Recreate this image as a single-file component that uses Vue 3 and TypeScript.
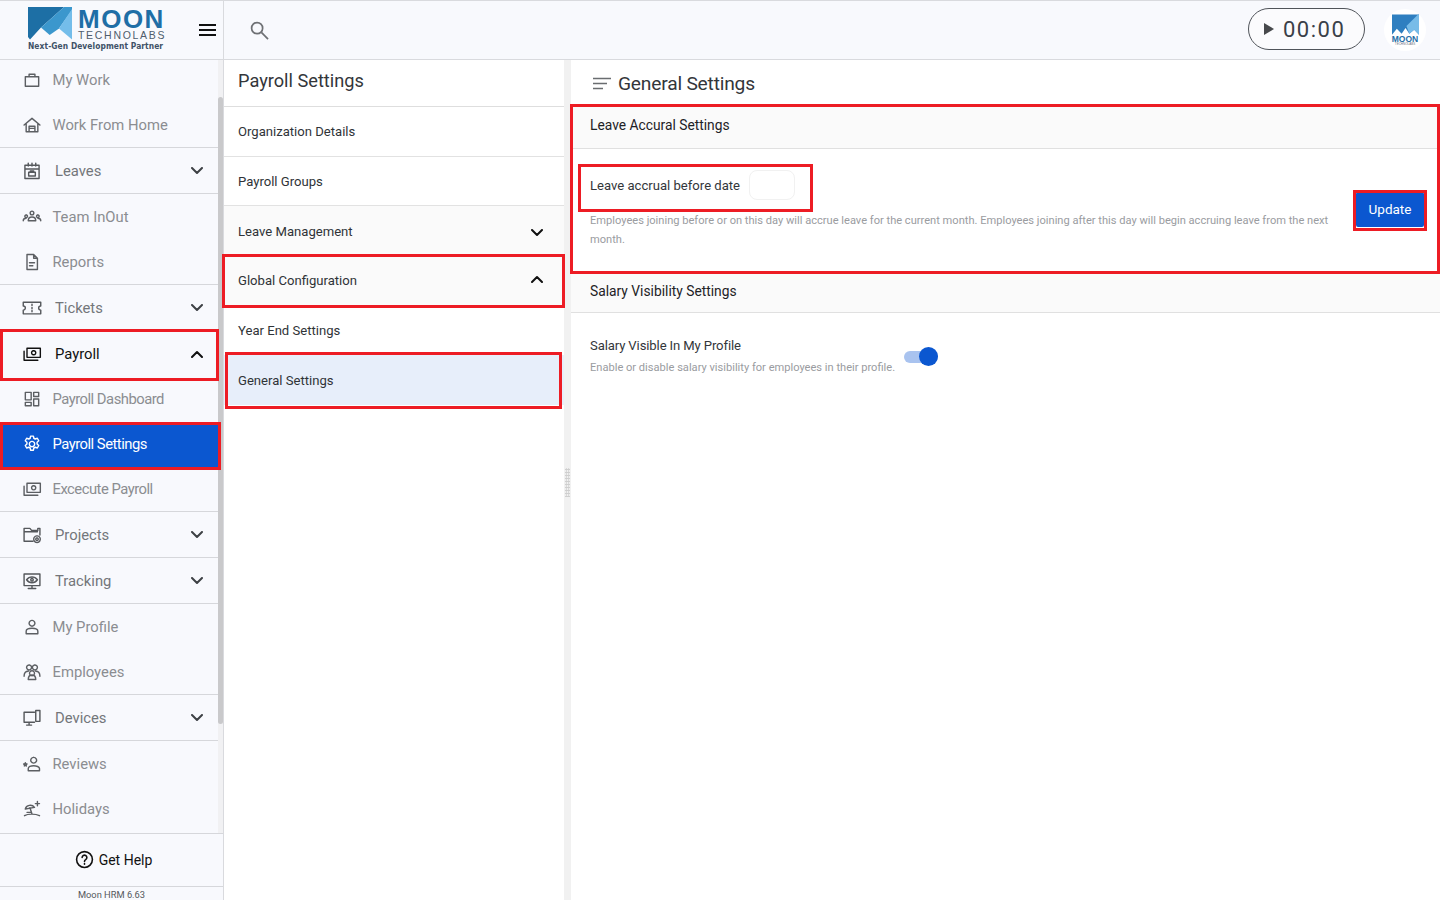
<script setup lang="ts">
interface NavItem { label: string; icon: string; kind: 'sub' | 'group'; open?: boolean; active?: boolean; strong?: boolean; end?: boolean; first?: boolean; tight?: boolean }
const nav: NavItem[] = [
  { label: 'My Work', icon: 'work', kind: 'sub', first: true },
  { label: 'Work From Home', icon: 'home', kind: 'sub', end: true },
  { label: 'Leaves', icon: 'cal', kind: 'group', end: true },
  { label: 'Team InOut', icon: 'team', kind: 'sub' },
  { label: 'Reports', icon: 'doc', kind: 'sub', end: true },
  { label: 'Tickets', icon: 'ticket', kind: 'group', end: true },
  { label: 'Payroll', icon: 'money', kind: 'group', open: true, strong: true },
  { label: 'Payroll Dashboard', icon: 'dash', kind: 'sub', tight: true },
  { label: 'Payroll Settings', icon: 'gear', kind: 'sub', active: true, tight: true },
  { label: 'Excecute Payroll', icon: 'money', kind: 'sub', end: true, tight: true },
  { label: 'Projects', icon: 'folder', kind: 'group', end: true },
  { label: 'Tracking', icon: 'screen', kind: 'group', end: true },
  { label: 'My Profile', icon: 'user', kind: 'sub' },
  { label: 'Employees', icon: 'people', kind: 'sub', end: true },
  { label: 'Devices', icon: 'devices', kind: 'group', end: true },
  { label: 'Reviews', icon: 'review', kind: 'sub' },
  { label: 'Holidays', icon: 'beach', kind: 'sub' },
]
const paths: Record<string, string> = {
  work: 'M4 8h16v11.500H4zM8.500 8V5h7v3',
  home: 'M2.500 12 12 4l9.500 8M5 10.500V20h14v-9.500M8.500 20v-6.500h7V20M8.500 16h7',
  cal: 'M3.500 5h17v16h-17zM3.500 9.500h17M7.500 2.500V6M12 2.500V6M16.500 2.500V6M8 13.500h8V18H8zM10 13.500V12h4v1.500',
  team: 'M12 7.200m-2.200 0a2.200 2.200 0 1 0 4.400 0a2.200 2.200 0 1 0-4.400 0M7.500 16.500c0-3 2-4.500 4.500-4.500s4.500 1.500 4.500 4.500zM5 9.500a1.600 1.600 0 1 0 .01 0M19 9.500a1.600 1.600 0 1 0 .01 0M1.500 16.500c0-2 1.200-3 3.500-3M22.500 16.500c0-2-1.200-3-3.500-3',
  doc: 'M6 3h8l4.500 4.500V21H6zM14 3v4.500h4.500M9 13h6M9 16.500h4',
  ticket: 'M1.500 5h21v4.500a2.500 2.500 0 0 0 0 5V19h-21v-4.500a2.500 2.500 0 0 0 0-5zM12 7.500v1.500M12 11.200v1.600M12 15v1.500',
  money: 'M6 5h16v11H6zM2.500 8.500V19.500H19M14 8a2.500 2.500 0 1 0 .01 0',
  dash: 'M4 4h7v9H4zM14 4h6v5h-6zM14 12h6v8h-6zM4 16h7v4H4z',
  gear: 'M12 8.800a3.200 3.200 0 1 0 .01 0M10.300 2.500h3.400l.5 2.600 1.700.9 2.500-.9 1.700 3-2 1.700v2.300l2 1.700-1.700 3-2.500-.9-1.700.9-.5 2.600h-3.400l-.5-2.600-1.700-.9-2.500.9-1.700-3 2-1.700V9.800l-2-1.700 1.700-3 2.500.9 1.700-.9z',
  folder: 'M2.500 4h7l2 2.500H19V4h2.500v8M2.500 4v15.500H13M2.500 8h16M18 13a4 4 0 1 0 .01 0M18 15.500a1.500 1.500 0 1 0 .01 0',
  screen: 'M2.500 3.500h19v14h-19zM12 17.500V21M7.500 21h9M5.500 10.500s2.500-3.500 6.500-3.500 6.500 3.500 6.500 3.500-2.500 3.500-6.500 3.500-6.500-3.500-6.500-3.500zM12 9a1.500 1.500 0 1 0 .01 0',
  user: 'M12 4a3.500 3.500 0 1 0 .01 0M5 20v-3c0-2 3-3.500 7-3.500s7 1.500 7 3.500v3z',
  people: 'M8.500 3.500a3 3 0 1 0 .01 0M15.500 3.500a3 3 0 1 0 .01 0M12 10.500a3 3 0 1 0 .01 0M7.500 21c0-4 2-5.500 4.500-5.500s4.500 1.500 4.500 5.500zM2.500 17c0-4 2-6 5-6M21.500 17c0-4-2-6-5-6',
  devices: 'M15 5H2.500v12H15M8.500 17v3.500M5.500 20.500h6M16.500 3h5v13h-5z',
  review: 'M14 4a3.500 3.500 0 1 0 .01 0M7.500 20v-2.500c0-2 3-3.500 6.500-3.500s7 1.500 7 3.500V20zM4 10.500l.6 1.300 1.400.2-1 1 .2 1.400-1.200-.7-1.200.7.2-1.400-1-1 1.400-.2z',
  beach: 'M4 12c1-5 8-6 11-2zM9.500 10.500 12 18M3 20c4-2.500 13-2.500 18 0M18.500 3v5M16 5.500h5M6 16h5',
}
const orgItems = ['Organization Details', 'Payroll Groups']
</script>

<template>
  <div class="app">
    <aside class="side">
      <div class="brand">
        <div class="logo">
          <svg class="logo-mark" viewBox="0 0 44 33" width="44" height="33">
            <path d="M0 0H36L13 20.600 2 32.600 0 30z" fill="#1d6fa5" />
            <path d="M36 0H44V3L31 21.600 21.700 28 13 20.600z" fill="#3b97cd" />
            <path d="M44 2V32.600L31 21.600z" fill="#74bdea" />
          </svg>
          <div class="logo-text">
            <span class="logo-moon">MOON</span>
            <span class="logo-tech">TECHNOLABS</span>
          </div>
          <span class="logo-tag">Next-Gen Development Partner</span>
        </div>
        <span class="burger"><i></i><i></i><i></i></span>
      </div>
      <nav class="nav">
        <div
          v-for="item in nav"
          :key="item.label"
          class="nav-row"
          :class="[item.kind, { active: item.active, strong: item.strong, end: item.end, first: item.first, tight: item.tight }]"
        >
          <svg class="nav-ico" viewBox="0 0 24 24" width="20" height="20"><path :d="paths[item.icon]" /></svg>
          <span class="nav-label">{{ item.label }}</span>
          <svg v-if="item.kind === 'group'" class="chev" viewBox="0 0 12 8" width="12" height="8">
            <path :d="item.open ? 'M1 7l5-5 5 5' : 'M1 1l5 5 5-5'" />
          </svg>
        </div>
        <span class="scroll-thumb"></span>
      </nav>
      <div class="help">
        <svg viewBox="0 0 24 24" width="19" height="19" class="help-ico">
          <circle cx="12" cy="12" r="10" />
          <path d="M9 9.500a3 3 0 1 1 4.500 2.600c-1 .6-1.500 1.200-1.500 2.400M12 17v1" />
        </svg>
        <span>Get Help</span>
      </div>
      <div class="version">Moon HRM 6.63</div>
    </aside>

    <div class="main">
      <header class="topbar">
        <svg class="search" viewBox="0 0 20 20" width="19" height="19">
          <circle cx="7.500" cy="7.500" r="5.800" />
          <path d="m12 12 7 7" />
        </svg>
        <div class="timer">
          <span class="play"></span>
          <span class="time">00:00</span>
        </div>
        <div class="avatar">
          <svg viewBox="0 0 28 21" width="27" height="21">
            <path d="M0 0h28v21l-5-5-5 4-4-6-4 6-5-5-5 6z" fill="#2f7fc0" />
            <path d="M15 12 27 0h1v21l-5-5-5 4z" fill="#78bce8" />
          </svg>
          <span class="av-moon">MOON</span>
          <span class="av-tech">TECHNOLABS</span>
        </div>
      </header>

      <div class="content">
        <section class="mid">
          <h2 class="mid-title">Payroll Settings</h2>
          <div v-for="o in orgItems" :key="o" class="mid-row line">{{ o }}</div>
          <div class="mid-row tint">
            <span>Leave Management</span>
            <svg class="chev dark" viewBox="0 0 12 8" width="12" height="8"><path d="M1 1l5 5 5-5" /></svg>
          </div>
          <div class="mid-row tint">
            <span>Global Configuration</span>
            <svg class="chev dark up" viewBox="0 0 12 8" width="12" height="8"><path d="M1 7l5-5 5 5" /></svg>
          </div>
          <div class="mid-row">Year End Settings</div>
          <div class="mid-row selected">General Settings</div>
        </section>

        <div class="split"><span class="grip"></span></div>

        <section class="right">
          <div class="right-head">
            <svg viewBox="0 0 18 13" width="18" height="13" class="lines">
              <path d="M0 1.500h18M0 6.500h14M0 11.500h10" />
            </svg>
            <h1>General Settings</h1>
          </div>

          <div class="sec-head">Leave Accural Settings</div>
          <div class="sec-body accrual">
            <div class="accrual-text">
              <div class="field">
                <span class="field-label">Leave accrual before date</span>
                <span class="date-input"></span>
              </div>
              <p class="hint">Employees joining before or on this day will accrue leave for the current month. Employees joining after this day will begin accruing leave from the next month.</p>
            </div>
            <button class="update" type="button">Update</button>
          </div>

          <div class="sec-head second">Salary Visibility Settings</div>
          <div class="sec-body salary">
            <div>
              <div class="field-label narrow">Salary Visible In My Profile</div>
              <p class="hint one">Enable or disable salary visibility for employees in their profile.</p>
            </div>
            <span class="toggle"><i></i></span>
          </div>
        </section>
      </div>
    </div>

    <span class="mark m1"></span>
    <span class="mark m2"></span>
    <span class="mark m3"></span>
    <span class="mark m4"></span>
    <span class="mark m5"></span>
    <span class="mark m6"></span>
    <span class="mark m7"></span>
  </div>
</template>

<style scoped>
.app {
  position: relative;
  display: flex;
  width: 1440px;
  height: 900px;
  overflow: hidden;
  box-sizing: border-box;
  border-top: 1px solid #d9dade;
  background: #fff;
  font-family: Roboto, "Liberation Sans", sans-serif;
  color: #2b2f33;
}
.side {
  width: 224px;
  flex: none;
  display: flex;
  flex-direction: column;
  background: #f8f9fd;
  border-right: 1px solid #d9dade;
  box-sizing: border-box;
}
.brand {
  height: 58px;
  flex: none;
  display: flex;
  align-items: center;
  border-bottom: 1px solid #d9dade;
  box-sizing: content-box;
  position: relative;
}
.logo {
  width: 140px;
  margin-left: 28px;
  align-self: flex-start;
  display: grid;
  grid-template-columns: 50px 1fr;
  grid-template-rows: 41px auto;
}
.logo-mark { grid-row: 1; grid-column: 1; margin-top: 6px; }
.logo-text { grid-row: 1; grid-column: 2; display: flex; flex-direction: column; align-items: flex-start; }
.logo-moon {
  font: 700 26px/24px "Liberation Sans", sans-serif;
  letter-spacing: 1.500px;
  color: #1f6ea6;
  margin-top: 6px;
}
.logo-tech {
  font: 400 10.500px/9px "Liberation Sans", sans-serif;
  letter-spacing: 1.700px;
  color: #4f5d6c;
}
.logo-tag {
  grid-column: 1 / 3;
  font: 700 8px/10px "DejaVu Sans", sans-serif;
  letter-spacing: .08px;
  color: #3f5268;
  white-space: nowrap;
  transform: scaleX(.94);
  transform-origin: left;
}
.burger {
  margin-left: 31px;
  display: flex;
  flex-direction: column;
  gap: 3px;
  width: 17px;
}
.burger i { display: block; height: 2px; background: #111; }
.nav { position: relative; flex: 1; min-height: 0; overflow: hidden; }
.nav::before {
  content: "";
  position: absolute;
  top: 0; bottom: 0; right: 0;
  width: 5px;
  background: #f1f1f3;
}
.nav-row {
  display: flex;
  align-items: center;
  width: 218px;
  box-sizing: border-box;
  font-size: 14.800px;
  color: #8b8d91;
}
.nav-row.sub { height: 45.400px; padding-left: 22px; }
.nav-row.first { height: 43px; padding-bottom: 3px; }
.nav-row.group { height: 46px; padding-left: 22px; color: #73767a; }
.nav-row.strong { height: 45px; color: #111; }
.nav-row.end { border-bottom: 1px solid #d6d7db; }
.nav-row.tight { letter-spacing: -.5px; }
.nav-ico { flex: none; fill: none; stroke: #5c5f63; stroke-width: 1.700; stroke-linejoin: round; stroke-linecap: round; }
.sub .nav-label { margin-left: 10.500px; }
.group .nav-label { margin-left: 13px; }
.group .nav-ico { stroke: #55585c; }
.chev { margin-left: auto; margin-right: 15px; fill: none; stroke: #3e4145; stroke-width: 2; stroke-linecap: round; stroke-linejoin: round; }
.nav-row.strong .nav-ico, .nav-row.strong .chev { stroke: #111; }
.nav-row.active { background: #0b57d0; color: #fff; }
.nav-row.active .nav-ico { stroke: #fff; }
.scroll-thumb {
  position: absolute;
  right: 0;
  top: 37px;
  width: 5px;
  height: 627px;
  background: #c9c9cb;
  border-radius: 3px;
}
.help {
  height: 54px;
  flex: none;
  box-sizing: border-box;
  border-top: 1px solid #d6d7db;
  border-bottom: 1px solid #d6d7db;
  display: flex;
  align-items: center;
  justify-content: center;
  gap: 5px;
  font-size: 14px;
  color: #111;
  padding-left: 4px;
  padding-bottom: 1px;
}
.help-ico { fill: none; stroke: #111; stroke-width: 2; stroke-linecap: round; }
.version {
  height: 13px;
  flex: none;
  padding-top: 2px;
  box-sizing: border-box;
  text-align: center;
  font-size: 9.300px;
  line-height: 11px;
  color: #55585c;
}
.main { flex: 1; min-width: 0; display: flex; flex-direction: column; }
.topbar {
  height: 58px;
  flex: none;
  display: flex;
  align-items: center;
  background: #f8f9fd;
  border-bottom: 1px solid #d9dade;
  padding-left: 26px;
  padding-right: 14px;
}
.search { fill: none; stroke: #6e7074; stroke-width: 1.800; }
.timer {
  margin-left: auto;
  margin-top: -2px;
  width: 117px;
  height: 42px;
  box-sizing: border-box;
  border: 1.500px solid #50545a;
  border-radius: 21px;
  display: flex;
  align-items: center;
  padding-left: 15px;
  gap: 9px;
  background: #fbfbfd;
}
.play {
  width: 0; height: 0;
  border-left: 10px solid #47494c;
  border-top: 6px solid transparent;
  border-bottom: 6px solid transparent;
}
.time { font-size: 22px; letter-spacing: 1.500px; color: #3a4048; }
.avatar {
  margin-left: 19px;
  width: 42px;
  height: 42px;
  border-radius: 50%;
  background: #fff;
  display: flex;
  flex-direction: column;
  align-items: center;
  justify-content: center;
}
.av-moon { font: 700 8.500px/8px "Liberation Sans", sans-serif; color: #1f6ea6; }
.av-tech { font: 400 3px/3px "Liberation Sans", sans-serif; color: #6b7280; }
.content { flex: 1; min-height: 0; display: flex; }
.mid { width: 340px; flex: none; background: #fff; }
.mid-title {
  margin: 0;
  height: 47px;
  box-sizing: border-box;
  border-bottom: 1px solid #dedede;
  padding: 9px 14px 0;
  font-size: 18.200px;
  line-height: 24px;
  font-weight: 400;
  color: #33363a;
}
.mid-row {
  height: 49.700px;
  box-sizing: border-box;
  display: flex;
  align-items: center;
  justify-content: space-between;
  padding: 0 21px 0 14px;
  font-size: 13.100px;
  color: #2f3337;
}
.mid-row.line { border-bottom: 1px solid #e2e2e2; }
.mid-row.tint { background: #fafafa; }
.mid-row.selected { background: #e7eefa; }
.chev.dark { margin: 4px 0 0; stroke: #111; }
.chev.dark.up { margin: -4px 0 0; }
.split {
  width: 7px;
  flex: none;
  background: #f1f1f1;
  display: flex;
  align-items: center;
  justify-content: center;
}
.grip {
  width: 5px;
  height: 29px;
  margin-top: 4px;
  background-image: radial-gradient(circle, #cfcfcf 1px, transparent 1.200px);
  background-size: 2.500px 3px;
}
.right { flex: 1; min-width: 0; background: #fff; }
.right-head {
  height: 47px;
  display: flex;
  align-items: center;
  padding-left: 22px;
  gap: 7px;
  box-sizing: border-box;
}
.right-head h1 { margin: 0; font-size: 19.200px; letter-spacing: -.2px; font-weight: 400; color: #33363a; }
.lines { fill: none; stroke: #6a6d70; stroke-width: 1.600; }
.sec-head {
  height: 42px;
  box-sizing: border-box;
  background: #fafafa;
  border-bottom: 1px solid #e0e0e0;
  display: flex;
  align-items: center;
  padding-left: 19px;
  font-size: 13.800px;
  color: #1e2226;
  padding-bottom: 5px;
}
.sec-head.second { height: 40px; padding-bottom: 3px; }
.accrual {
  height: 124px;
  display: flex;
  align-items: center;
  padding: 0 16px 0 19px;
  box-sizing: border-box;
}
.accrual-text { flex: 1; min-width: 0; padding-right: 20px; margin-top: -6px; }
.field { display: flex; align-items: center; gap: 9px; height: 36px; }
.field-label { font-size: 13.100px; color: #33363a; }
.field-label.narrow { letter-spacing: -.12px; }
.date-input {
  width: 46px;
  height: 30px;
  box-sizing: border-box;
  border: 1px solid #f1f1f1;
  border-radius: 8px;
  background: #fff;
}
.hint { margin: 8px 0 0; font-size: 11.100px; line-height: 19px; color: #9a9c9f; }
.hint.one { margin-top: 5px; }
.update {
  width: 68px;
  height: 35px;
  flex: none;
  background: #0b57d0;
  color: #fff;
  border: 0;
  border-radius: 2px;
  font: 400 13.500px Roboto, sans-serif;
  margin-top: -4px;
}
.salary { display: flex; align-items: center; padding: 25px 0 0 19px; gap: 9px; }
.toggle { position: relative; display: block; width: 34px; height: 12px; margin-top: -2px; background: #a9c3ef; border-radius: 6px; }
.toggle i {
  position: absolute;
  right: 0;
  top: -4px;
  width: 19px;
  height: 19px;
  border-radius: 50%;
  background: #0b57d0;
}
.mark { position: absolute; box-sizing: border-box; border: 3px solid #ed1c24; pointer-events: none; }
.m1 { left: 0; top: 328px; width: 219px; height: 52px; }
.m2 { left: 0; top: 421px; width: 221px; height: 48px; }
.m3 { left: 222px; top: 253px; width: 343px; height: 54px; }
.m4 { left: 225px; top: 351px; width: 337px; height: 57px; }
.m5 { left: 570px; top: 103px; width: 870px; height: 170px; }
.m6 { left: 578px; top: 163px; width: 235px; height: 48px; }
.m7 { left: 1353px; top: 189px; width: 74px; height: 41px; }
</style>
